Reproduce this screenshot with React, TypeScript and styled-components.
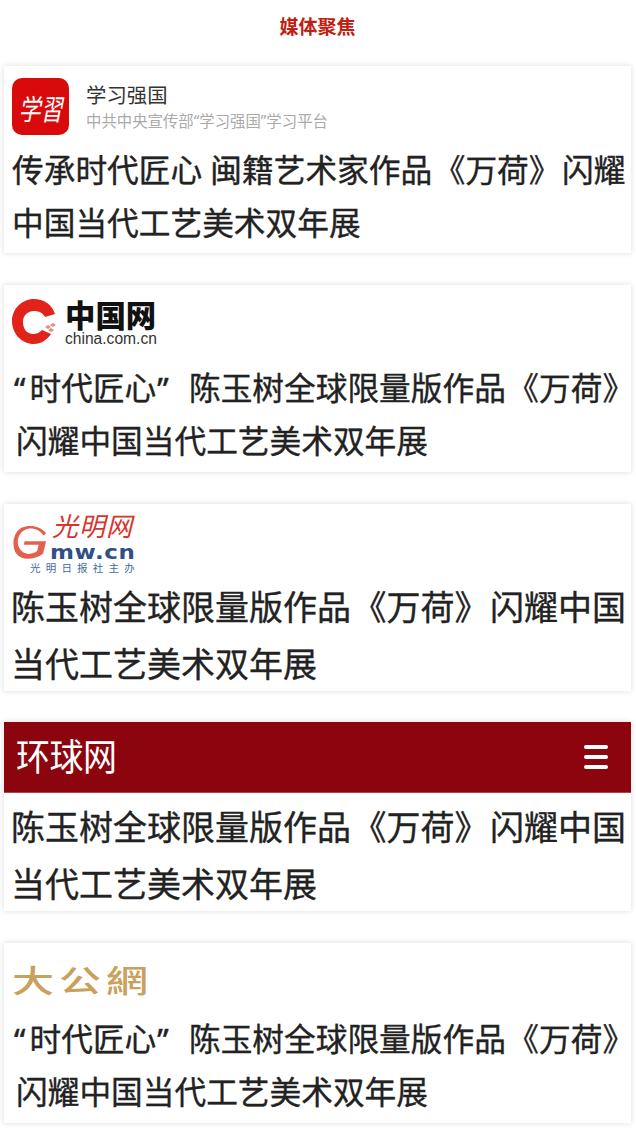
import React from "react";
import styled, { createGlobalStyle } from "styled-components";

const GlobalStyle = createGlobalStyle`
	html, body {
		margin: 0;
		padding: 0;
		background: #fff;
	}
	body {
		font-family: "Noto Sans", "Noto Sans CJK SC", sans-serif;
	}
`;

const SPage = styled.div`
	width: 636px;
	height: 1146px;
	overflow: hidden;
	box-sizing: border-box;
	padding: 0 5px 0 4px;
`;

const STitle = styled.h2`
	margin: 0;
	height: 66px;
	padding-bottom: 14px;
	box-sizing: border-box;
	display: flex;
	align-items: center;
	justify-content: center;
	font-size: 19px;
	font-weight: 700;
	color: #c0200f;
`;

const SList = styled.div`
	display: flex;
	flex-direction: column;
	gap: 31.6px;
`;

const SCard = styled.article<{ $h: number }>`
	height: ${(p) => p.$h}px;
	background: #fff;
	box-shadow: 0 0 6px rgba(0, 0, 0, 0.14);
	overflow: hidden;
`;

const SHead = styled.div<{ $h: number }>`
	height: ${(p) => p.$h}px;
	box-sizing: border-box;
	display: flex;
	align-items: center;
`;

const SHeadline = styled.h3<{ $big?: boolean }>`
	margin: 0;
	padding-left: ${(p) => (p.$big ? 7 : 8)}px;
	font-size: ${(p) => (p.$big ? 34 : 31.7)}px;
	line-height: ${(p) => (p.$big ? 57 : 53)}px;
	font-weight: 400;
	-webkit-text-stroke: 0.35px #222;
	color: #222;
	white-space: nowrap;
`;

const SIndent = styled.span`
	display: block;
	padding-left: 4px;
`;

const SQuote = styled.span<{ $w: number; $pad?: number }>`
	display: inline-block;
	box-sizing: border-box;
	width: ${(p) => p.$w}px;
	padding-left: ${(p) => p.$pad ?? 0}px;
	-webkit-text-stroke: 0.5px #222;
`;

const SBook = styled.span`
	padding: 0 1.5px;
`;

// the closing bracket hangs at the line end, so it keeps only its inked half
const SBookEnd = styled.span`
	font-feature-settings: "halt";
`;

const SXuexi = styled(SHead)`
	padding: 4px 0 0 8px;
	gap: 17px;
`;

const SXuexiIcon = styled.div`
	width: 57px;
	height: 57px;
	border-radius: 10px;
	background: #d90a0c;
	display: flex;
	align-items: center;
	justify-content: center;
	span {
		color: #fff;
		font-size: 22px;
		font-weight: 400;
		font-style: italic;
		white-space: nowrap;
		transform: scaleY(1.3);
	}
`;

const SXuexiText = styled.div`
	display: flex;
	flex-direction: column;
	gap: 3px;
	strong {
		font-size: 20.4px;
		line-height: 28px;
		font-weight: 400;
		color: #333;
	}
	span {
		font-size: 15.4px;
		line-height: 20px;
		color: #aaa;
	}
`;

const SChina = styled(SHead)`
	padding: 0 0 3px 8px;
	gap: 9px;
`;

const SChinaText = styled.div`
	display: flex;
	flex-direction: column;
	margin-top: 3px;
	strong {
		font-size: 30.4px;
		line-height: 31px;
		font-weight: 900;
		color: #111;
	}
	span {
		font-family: "Liberation Sans", sans-serif;
		font-size: 15.6px;
		line-height: 16px;
		color: #333;
	}
`;

const SGuangming = styled(SHead)`
	padding: 4px 0 0 8px;
`;

const SGmBox = styled.div`
	position: relative;
	width: 130px;
	height: 62px;
`;

const SGmCalli = styled.span`
	position: absolute;
	left: 40px;
	top: -4px;
	font-size: 26px;
	line-height: 36px;
	font-style: italic;
	font-weight: 400;
	letter-spacing: 1px;
	color: #d8332c;
	white-space: nowrap;
`;

const SGmDomain = styled.span`
	position: absolute;
	left: 38px;
	top: 29px;
	font-family: "DejaVu Sans", sans-serif;
	font-size: 20px;
	line-height: 22px;
	font-weight: 700;
	letter-spacing: 0.5px;
	color: #2f4f86;
	transform: scaleX(1.15);
	transform-origin: left center;
`;

const SGmSub = styled.span`
	position: absolute;
	left: 18px;
	top: 49px;
	font-size: 10.5px;
	line-height: 14px;
	letter-spacing: 5.2px;
	color: #3f6aa5;
	white-space: nowrap;
`;

const SHuanqiu = styled(SHead)`
	background: #8c050e;
	justify-content: space-between;
	padding: 0 23px 0 12px;
	margin-bottom: 6px;
	border-bottom: 1px solid #a8434a;
`;

const SHuanqiuLogo = styled.span`
	color: #fff;
	font-size: 34px;
	line-height: 40px;
	font-weight: 400;
	letter-spacing: -0.5px;
	transform: scaleY(1.1);
`;

const SMenu = styled.div`
	width: 24px;
	display: flex;
	flex-direction: column;
	gap: 6px;
	i {
		display: block;
		height: 4px;
		border-radius: 2px;
		background: #fff;
	}
`;

const SDagong = styled(SHead)`
	padding: 5px 0 0 8px;
`;

const SDagongLogo = styled.span`
	font-size: 42px;
	line-height: 44px;
	font-weight: 500;
	letter-spacing: 5px;
	color: #c9a05c;
	transform: scaleY(0.72);
`;

const SGmMark = styled.svg`
	position: absolute;
	left: 0;
	top: 13px;
`;

const LongTitle = (
	<>
		<SQuote $w={17.5} $pad={2}>“</SQuote>
		时代匠心
		<SQuote $w={32.7} $pad={1}>”</SQuote>
		陈玉树全球限量版作品<SBook>《万荷<SBookEnd>》</SBookEnd></SBook>
		<SIndent>闪耀中国当代工艺美术双年展</SIndent>
	</>
);

const ShortTitle = (
	<>
		陈玉树全球限量版作品<SBook>《万荷》</SBook>闪耀中国
		<br />
		当代工艺美术双年展
	</>
);

function ChinaMark() {
	return (
		<svg width="44" height="46" viewBox="0 0 44 46">
			<path d="M43 15C40 5 31 0 22 0C10 0 0 10 0 22C0 35 10 45 22 45C29 45 35 41 39 35L30 31C27 34 24 35 21 35C15 35 11 30 11 23C11 16 16 12 22 12C27 12 31 14 33 18Z" fill="#e2231a" />
			<path d="M33 28l3-2 3 2-3 2zM38 26l3-2 3 2-3 2zM36 31l3-2 3 2-3 2z" fill="#ec8a80" />
		</svg>
	);
}

function GmMark() {
	return (
		<SGmMark width="37" height="36" viewBox="0 0 50 40" preserveAspectRatio="none">
			<path d="M46 9C38 1 24-1 13 3C1 8-1 24 6 32C13 40 30 39 42 32L46 18H17L16 22H36L34 29C28 33 16 34 11 27C5 20 8 10 16 6C25 2 36 4 43 12Z" fill="#e4604c" />
		</SGmMark>
	);
}

export default function App() {
	return (
		<>
			<GlobalStyle />
			<SPage>
				<STitle>媒体聚焦</STitle>
				<SList>
					<SCard $h={187.2}>
						<SXuexi $h={77}>
							<SXuexiIcon>
								<span>学習</span>
							</SXuexiIcon>
							<SXuexiText>
								<strong>学习强国</strong>
								<span>中共中央宣传部“学习强国”学习平台</span>
							</SXuexiText>
						</SXuexi>
						<SHeadline>
							传承时代匠心 闽籍艺术家作品<SBook>《万荷》</SBook>闪耀
							<br />
							中国当代工艺美术双年展
						</SHeadline>
					</SCard>
					<SCard $h={187.2}>
						<SChina $h={76.5}>
							<ChinaMark />
							<SChinaText>
								<strong>中国网</strong>
								<span>china.com.cn</span>
							</SChinaText>
						</SChina>
						<SHeadline>{LongTitle}</SHeadline>
					</SCard>
					<SCard $h={187.2}>
						<SGuangming $h={75.5}>
							<SGmBox>
								<GmMark />
								<SGmCalli>光明网</SGmCalli>
								<SGmDomain>mw.cn</SGmDomain>
								<SGmSub>光明日报社主办</SGmSub>
							</SGmBox>
						</SGuangming>
						<SHeadline $big>{ShortTitle}</SHeadline>
					</SCard>
					<SCard $h={189}>
						<SHuanqiu $h={71}>
							<SHuanqiuLogo>环球网</SHuanqiuLogo>
							<SMenu>
								<i />
								<i />
								<i />
							</SMenu>
						</SHuanqiu>
						<SHeadline $big>{ShortTitle}</SHeadline>
					</SCard>
					<SCard $h={180}>
						<SDagong $h={69.5}>
							<SDagongLogo>大公網</SDagongLogo>
						</SDagong>
						<SHeadline>{LongTitle}</SHeadline>
					</SCard>
				</SList>
			</SPage>
		</>
	);
}
